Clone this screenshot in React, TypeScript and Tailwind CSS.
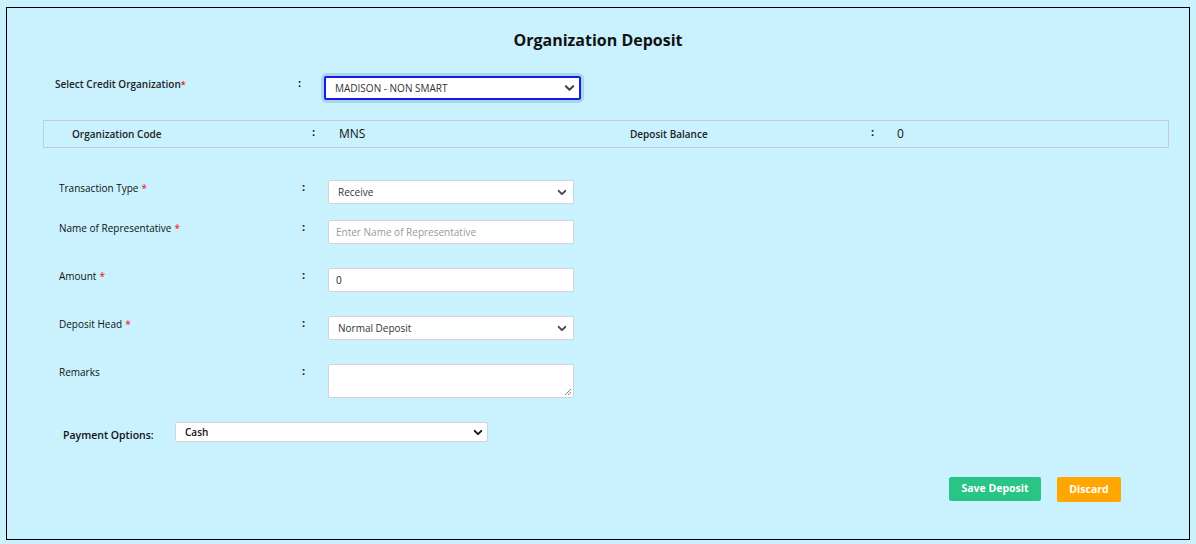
import React from 'react';

const font = { fontFamily: '"Open Sans", "Noto Sans", sans-serif' };

const Chevron = ({ className }: { className?: string }) => (
  <svg
    viewBox="0 0 12 8"
    className={className}
    fill="none"
    stroke="currentColor"
    strokeWidth={2.2}
    strokeLinecap="round"
    strokeLinejoin="round"
  >
    <path d="M2 2l4 4 4-4" />
  </svg>
);

const Req = () => <span className="text-[#ff0000] ml-[3px]">*</span>;

type RowProps = {
  label: string;
  required?: boolean;
  children: React.ReactNode;
  className?: string;
};

const FormRow = ({ label, required, children, className }: RowProps) => (
  <div className={`flex items-start ${className ?? ''}`}>
    <div className="w-[243px] pt-[1px] text-[10px] leading-[15px] text-[#111]">
      {label}
      {required && <Req />}
    </div>
    <div className="w-[26px] text-[11px] font-bold leading-[14px] text-[#111]">:</div>
    {children}
  </div>
);

const SelectBox = ({ value }: { value: string }) => (
  <div className="flex items-center justify-between w-[246px] h-[24px] bg-white border border-[#d0d4d8] rounded-[2px] pl-[9px] pr-[6px]">
    <span className="text-[10px] text-[#333]">{value}</span>
    <Chevron className="w-[10px] h-[7px] text-[#444]" />
  </div>
);

const App: React.FC = () => {
  return (
    <div className="w-[1196px] h-[544px] bg-[#c9f1fe] pt-[7px] pl-[6px]" style={font}>
      <div className="w-[1184px] h-[533px] border border-black flex flex-col">
        <h1 className="text-center text-[16px] font-bold text-[#111] mt-[20px] leading-[24px]">
          Organization Deposit
        </h1>

        <div className="flex items-start mt-[24px] ml-[48px]">
          <div className="w-[243px] pt-[1px] text-[10px] leading-[15px] font-semibold text-[#222]">
            Select Credit Organization
            <span className="text-[#ff0000] text-[9px]">*</span>
          </div>
          <div className="w-[26px] text-[11px] leading-[14px] font-bold text-[#111]">:</div>
          <div className="rounded-[3px] shadow-[0_0_0_3px_#a9d6ea]">
            <div className="flex items-center justify-between w-[257px] h-[24px] bg-white border-2 border-[#1a1ae6] rounded-[2px] pl-[9px] pr-[4px]">
              <span className="text-[10px] text-[#333]">MADISON - NON SMART</span>
              <Chevron className="w-[11px] h-[8px] text-[#444]" />
            </div>
          </div>
        </div>

        <div className="flex items-center ml-[36px] mt-[20px] w-[1126px] h-[28px] border border-[#c4cbd0]">
          <div className="w-[268px] pl-[28px] text-[10px] font-semibold text-[#222]">Organization Code</div>
          <div className="w-[27px] text-[11px] font-bold text-[#111] -mt-[4px]">:</div>
          <div className="w-[291px] text-[12px] text-[#111]">MNS</div>
          <div className="w-[241px] text-[10px] font-semibold text-[#222]">Deposit Balance</div>
          <div className="w-[26px] text-[11px] font-bold text-[#111] -mt-[4px]">:</div>
          <div className="text-[12px] text-[#111]">0</div>
        </div>

        <div className="flex flex-col ml-[52px] mt-[32px]">
          <FormRow label="Transaction Type" required>
            <SelectBox value="Receive" />
          </FormRow>

          <FormRow label="Name of Representative" required className="mt-[16px]">
            <div className="flex items-center w-[246px] h-[24px] bg-white border border-[#d0d4d8] rounded-[2px] pl-[7px]">
              <span className="text-[10px] text-[#999]">Enter Name of Representative</span>
            </div>
          </FormRow>

          <FormRow label="Amount" required className="mt-[24px]">
            <div className="flex items-center w-[246px] h-[24px] bg-white border border-[#d0d4d8] rounded-[2px] pl-[7px]">
              <span className="text-[10px] text-[#222]">0</span>
            </div>
          </FormRow>

          <FormRow label="Deposit Head" required className="mt-[24px]">
            <SelectBox value="Normal Deposit" />
          </FormRow>

          <FormRow label="Remarks" className="mt-[24px]">
            <div className="relative w-[246px] h-[34px] bg-white border border-[#d0d4d8] rounded-[2px]">
              <svg viewBox="0 0 8 8" className="absolute right-[1px] bottom-[1px] w-[8px] h-[8px] text-[#777]" stroke="currentColor" strokeWidth={0.9}>
                <path d="M7 1L1 7M7 4L4 7" />
              </svg>
            </div>
          </FormRow>
        </div>

        <div className="flex items-start ml-[56px] mt-[24px]">
          <div className="w-[112px] pt-[6px] text-[10.5px] leading-[15px] font-semibold text-[#111]">Payment Options:</div>
          <div className="flex items-center justify-between w-[313px] h-[20px] bg-white border border-[#d0d4d8] rounded-[2px] pl-[9px] pr-[4px]">
            <span className="text-[10px] font-semibold text-[#111]">Cash</span>
            <Chevron className="w-[10px] h-[7px] text-[#111]" />
          </div>
        </div>

        <div className="flex justify-end gap-[16px] mr-[68px] mt-[34px]">
          <button className="w-[92px] h-[24px] bg-[#28c587] rounded-[2px] text-white text-[10.5px] font-bold">
            Save Deposit
          </button>
          <button className="w-[64px] h-[25px] bg-[#ffa600] rounded-[2px] text-white text-[10.5px] font-bold">
            Discard
          </button>
        </div>
      </div>
    </div>
  );
};

export default App;
